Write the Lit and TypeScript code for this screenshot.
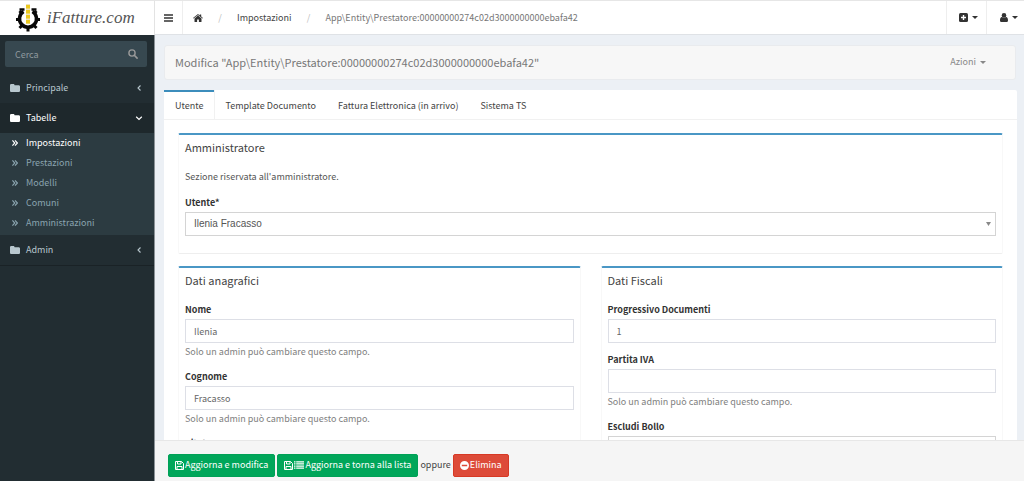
import { LitElement, html, svg, css, nothing } from "lit";
import { customElement, state } from "lit/decorators.js";

const folder = html`<svg class="ico" width="10" height="8" viewBox="0 0 10 8"><path d="M0 1.3C0 .6.5 0 1.2 0h2.2c.7 0 1.2.6 1.2 1.3h4.1c.7 0 1.3.6 1.3 1.2v4.2C10 7.400 9.400 8 8.700 8H1.300C.6 8 0 7.400 0 6.700z" fill="currentColor"/></svg>`;
const raquo = html`<svg class="ico" width="6" height="6" viewBox="0 0 6 6"><path d="M.4.4 2.800 3 .4 5.600M3 .4 5.400 3 3 5.600" fill="none" stroke="currentColor" stroke-width="1.200"/></svg>`;
const angleLeft = html`<svg class="ico" width="8" height="8" viewBox="0 0 8 8"><path d="M5.500 1.500 3 4l2.500 2.500" fill="none" stroke="currentColor" stroke-width="1.100"/></svg>`;
const angleDown = html`<svg class="ico" width="8" height="8" viewBox="0 0 8 8"><path d="M1.200 2.800 4 5.500l2.800-2.700" fill="none" stroke="currentColor" stroke-width="1.200"/></svg>`;
const caret = html`<svg class="ico" width="6" height="3" viewBox="0 0 6 3"><path d="M0 0h6L3 3z" fill="currentColor"/></svg>`;
const save = html`<svg class="ico" width="9" height="9" viewBox="0 0 9 9"><path d="M.5.5h6l2 2v6h-8zM2.500.5v2.500h3.500V.5M2 8.500v-3h5v3" fill="none" stroke="currentColor" stroke-width="1"/></svg>`;
const list = html`<svg class="ico" width="10" height="8" viewBox="0 0 10 8"><path d="M0 .2h1.500v1.300H0zM2.200.2H10v1.300H2.200zM0 2.300h1.500v1.300H0zM2.200 2.300H10v1.300H2.200zM0 4.400h1.500v1.300H0zM2.200 4.400H10v1.300H2.200zM0 6.500h1.500v1.300H0zM2.200 6.500H10v1.300H2.200z" fill="currentColor"/></svg>`;
const minus = html`<svg class="ico" width="9" height="9" viewBox="0 0 9 9"><path fill-rule="evenodd" d="M4.500 0a4.500 4.500 0 1 1 0 9 4.500 4.500 0 0 1 0-9zM1.800 3.800v1.400h5.400V3.800z" fill="currentColor"/></svg>`;

const LOCKED = "Solo un admin può cambiare questo campo.";

@customElement("app-field")
export class AppField extends LitElement {
  static properties = {
    label: {}, value: {}, help: {}, kind: {},
  };
  label = "";
  value = "";
  help = "";
  kind = "text";

  static styles = css`
    :host { display: block; margin-bottom: 10px; }
    .label { display: block; font-weight: 700; color: #333; line-height: 14px; margin-bottom: 2px; }
    .control { display: block; box-sizing: border-box; width: 100%; height: 24px; margin: 0; padding: 0 8px;
      border: 1px solid #dddfe6; border-radius: 0; background: #fff; color: #666; font: inherit; appearance: none; outline: none; }
    .pick { position: relative; color: #888; }
    .pick .control { color: #555; border-color: #d4d4d4; font-family: "Liberation Sans", sans-serif; font-size: 10px; }
    .arrow { position: absolute; right: 5px; top: 10px; width: 5px; height: 4px; }
    .help { color: #808080; line-height: 14px; margin: 2px 0 0; padding-bottom: 1px; }
  `;

  render() {
    return html`
      <label class="label" for="f">${this.label}</label>
      ${this.kind === "select"
        ? html`<div class="pick"><select id="f" class="control"><option>${this.value}</option></select>
            <svg class="arrow" viewBox="0 0 5 4"><path d="M0 0h5L2.500 4z" fill="currentColor"/></svg></div>`
        : html`<input id="f" class="control" type="text" .value=${this.value} />`}
      ${this.help ? html`<p class="help">${this.help}</p>` : nothing}`;
  }
}

@customElement("app-root")
export class AppRoot extends LitElement {
  @state() private tab = 0;

  private tabs = ["Utente", "Template Documento", "Fattura Elettronica (in arrivo)", "Sistema TS"];
  private items = ["Impostazioni", "Prestazioni", "Modelli", "Comuni", "Amministrazioni"];

  static styles = css`
    :host { display: grid; grid-template-columns: 155px minmax(0, 1fr); height: 100vh; overflow: hidden;
      font-family: "Noto Sans CJK SC", "Source Sans Pro", sans-serif; font-size: 9px; line-height: 14px; color: #444; background: #ecf0f5; }
    * { box-sizing: border-box; }
    a { color: inherit; text-decoration: none; }
    button { font: inherit; cursor: pointer; }
    .ico { display: block; flex: none; }

    .side { background: #222d32; color: #b8c7ce; display: flex; flex-direction: column; border-right: 1px solid #8b9297; }
    .brand { display: flex; align-items: center; gap: 6px; height: 35px; margin-right: -1px; padding-left: 15px; background: #fff;
      border-top: 1px solid #e6e6e6; border-right: 1px solid #e3e3e3; color: #555; font: italic 17px "Liberation Serif", serif; }
    .search { display: flex; align-items: center; height: 26px; margin: 6px 7px 6px 5px; padding-right: 9px; background: #374850; border-radius: 2px; color: #999; }
    .search input { flex: 1; min-width: 0; height: 100%; padding: 0 10px; border: 0; background: none; color: #999; font: inherit; outline: none; }
    .search input::placeholder { color: #8f999e; opacity: 1; }
    .search button { padding: 0; border: 0; background: none; color: #999; }
    .menu, .sub { list-style: none; margin: 0; padding: 0; }
    .group { display: flex; align-items: center; height: 30px; padding: 0 11px 0 10px; gap: 6px; }
    .group span { flex: 1; }
    .group.open { background: #1e282c; color: #fff; }
    .sub { background: #2c3b41; color: #8aa4af; padding-bottom: 2px; }
    .sub a { display: flex; align-items: center; gap: 8px; height: 20px; padding-left: 12px; }
    .sub a.on { color: #fff; }
    .menu { border-bottom: 1px solid #1a2226; }

    .main { display: flex; flex-direction: column; min-width: 0; min-height: 0; }
    .nav { flex: none; display: flex; align-items: stretch; height: 35px; background: #fff; border-top: 1px solid #e6e6e6; border-bottom: 1px solid #dfe2e6; color: #333; }
    .nav button { display: flex; align-items: center; gap: 4px; border: 0; background: none; color: #333; padding: 0 9px; }
    .nav .toggle { width: 28px; border-right: 1px solid #eee; }
    .crumbs { flex: 1; display: flex; align-items: center; list-style: none; margin: 0; padding: 0 0 0 10px; }
    .crumbs li { display: flex; align-items: center; color: #444; }
    .crumbs li + li::before { content: "/"; color: #bbb; width: 34px; text-align: center; }
    .crumbs .here { color: #777; }
    .nav .drop { border-left: 1px solid #eee; padding: 0 8px 0 12px; }
    .nav .drop:last-child { padding: 0 6px 0 13px; }

    .content { flex: 1; min-height: 0; overflow: auto; scrollbar-width: none; padding: 10px 7px 0 9px; }
    .title { display: flex; align-items: center; justify-content: space-between; height: 35px; padding: 0 29px 1px 10px;
      background: #f7f7f7; border: 1px solid #e9ebee; border-radius: 3px; margin: 0 1px 10px 0; color: #777; }
    .title h1 { margin: 0; font-size: 11px; font-weight: 400; }
    .title button { display: flex; align-items: center; gap: 4px; padding: 0; border: 0; background: none; color: #888; }

    .panel { background: #fff; border-radius: 2px; }
    .tabs { display: flex; border-bottom: 1px solid #f1f1f1; }
    .tab { height: 29px; padding: 1px 11px 0; border: 0; border-top: 2px solid transparent; background: none; color: #444; }
    .tab.on { border-top-color: #3c8dbc; box-shadow: 1px 0 #f1f1f1; }
    .body { display: grid; grid-template-columns: 1fr 1fr; gap: 12px 20px; padding: 13px 14px; }
    .box { border: 1px solid #f8f8f8; border-top: 2px solid #4a97c5; border-bottom-color: #eee; border-radius: 2px; padding: 5px 6px 7px; min-width: 0; }
    .wide { grid-column: 1 / -1; }
    .box h2 { margin: 0 0 16px; font-size: 11px; font-weight: 400; line-height: 14px; color: #444; }
    .box p { margin: 0 0 12px; color: #555; }

    .foot { flex: none; display: flex; align-items: center; gap: 2px; height: 41px; padding: 8px 13px 0; background: #f5f5f5; border-top: 1px solid #e7e7e7; }
    .btn { display: flex; align-items: center; gap: 1px; height: 23px; padding: 0 6px; border: 1px solid #00a157; border-radius: 2px; background: #00a65a; color: #fff; }
    .btn.red { background: #dd4b39; border-color: #d73925; }
  `;

  render() {
    return html`
      <aside class="side">
        <a class="brand" href="#">
          <svg width="26" height="30" viewBox="0 0 26 30">
            <path d="M8.500 8.500A8.500 8.500 0 1 0 17.500 8.500" fill="none" stroke="#080808" stroke-width="3.500"/>
            <path d="M4.500 6.500h5M16.500 6.500h5" stroke="#080808" stroke-width="2.500"/>
            <g fill="#080808">${[0, 45, 90, 135, 180, 225, 270].map((a) => svg`<rect x="11.500" y="25" width="3" height="3.500" transform=${`rotate(${a - 135} 13 16.500)`}/>`)}</g>
            <rect x="10" y="0" width="6" height="21" fill="#fff"/>
            <path d="M11 1h4v20h-4z" fill="#eee3b8"/>
            <path d="M11 2h4v3.500h-4zM11 7h4v3.500h-4zM11 12h4v3.500h-4zM11 17h4v3.500h-4z" fill="#ecc91f"/>
          </svg>
          iFatture.com</a>
        <form class="search">
          <input type="text" placeholder="Cerca" aria-label="Cerca" />
          <button type="button" aria-label="Cerca"><svg class="ico" width="10" height="10" viewBox="0 0 10 10"><circle cx="4" cy="4" r="3.100" fill="none" stroke="currentColor" stroke-width="1.400"/><path d="m6.300 6.300 2.800 2.800" stroke="currentColor" stroke-width="1.600" stroke-linecap="round"/></svg></button>
        </form>
        <ul class="menu">
          <li><a class="group" href="#">${folder}<span>Principale</span>${angleLeft}</a></li>
          <li><a class="group open" href="#">${folder}<span>Tabelle</span>${angleDown}</a>
            <ul class="sub">${this.items.map((t, i) => html`<li><a href="#" class=${i ? "" : "on"}>${raquo}${t}</a></li>`)}</ul>
          </li>
          <li><a class="group" href="#">${folder}<span>Admin</span>${angleLeft}</a></li>
        </ul>
      </aside>
      <div class="main">
        <header class="nav">
          <button class="toggle" aria-label="Menu"><svg class="ico" width="9" height="8" viewBox="0 0 9 8"><path d="M0 1h9M0 4h9M0 7h9" stroke="currentColor" stroke-width="1.500"/></svg></button>
          <ol class="crumbs">
            <li><a href="#" aria-label="Home"><svg class="ico" width="10" height="8" viewBox="0 0 10 8"><path d="M5 1.600 8.500 4.500V7.500q0 .5-.5.5H5.900V5.400H4.100V8H2q-.5 0-.5-.5V4.500zM0 4.100 5 0l1.700 1.400V.4h1.500v2.200L10 4.100l-.5.500L5 .9.5 4.600z" fill="#333"/></svg></a></li>
            <li><a href="#">Impostazioni</a></li>
            <li class="here">App\\Entity\\Prestatore:00000000274c02d3000000000ebafa42</li>
          </ol>
          <button class="drop" aria-label="Aggiungi"><svg class="ico" width="9" height="9" viewBox="0 0 9 9"><rect width="9" height="9" rx="1.500" fill="currentColor"/><path d="M4.500 2v5M2 4.500h5" stroke="#fff" stroke-width="1.400"/></svg>${caret}</button>
          <button class="drop" aria-label="Profilo"><svg class="ico" width="8" height="9" viewBox="0 0 8 9"><circle cx="4" cy="2.400" r="2.300" fill="currentColor"/><path d="M0 7.500C0 5.300.7 4.200 1.900 4.100c1.200 1 3 1 4.200 0C7.300 4.200 8 5.300 8 7.500 8 8.400 7.500 9 6.700 9H1.300C.5 9 0 8.400 0 7.500z" fill="currentColor"/></svg>${caret}</button>
        </header>
        <main class="content">
          <div class="title"><h1>Modifica "App\\Entity\\Prestatore:00000000274c02d3000000000ebafa42"</h1><button>Azioni ${caret}</button></div>
          <div class="panel">
            <div class="tabs" role="tablist">${this.tabs.map((t, i) => html`<button role="tab" class="tab ${i === this.tab ? "on" : ""}" @click=${() => (this.tab = i)}>${t}</button>`)}</div>
            <div class="body">
              <section class="box wide">
                <h2>Amministratore</h2>
                <p>Sezione riservata all'amministratore.</p>
                <app-field label="Utente*" kind="select" value="Ilenia Fracasso"></app-field>
              </section>
              <section class="box">
                <h2>Dati anagrafici</h2>
                <app-field label="Nome" value="Ilenia" help=${LOCKED}></app-field>
                <app-field label="Cognome" value="Fracasso" help=${LOCKED}></app-field>
                <app-field label="Titolo"></app-field>
              </section>
              <section class="box">
                <h2>Dati Fiscali</h2>
                <app-field label="Progressivo Documenti" value="1"></app-field>
                <app-field label="Partita IVA" help=${LOCKED}></app-field>
                <app-field label="Escludi Bollo" kind="select" value="No"></app-field>
              </section>
            </div>
          </div>
        </main>
        <footer class="foot">
          <button class="btn">${save}Aggiorna e modifica</button>
          <button class="btn">${save}${list}Aggiorna e torna alla lista</button>
          <span>oppure</span>
          <button class="btn red">${minus}Elimina</button>
        </footer>
      </div>`;
  }
}
